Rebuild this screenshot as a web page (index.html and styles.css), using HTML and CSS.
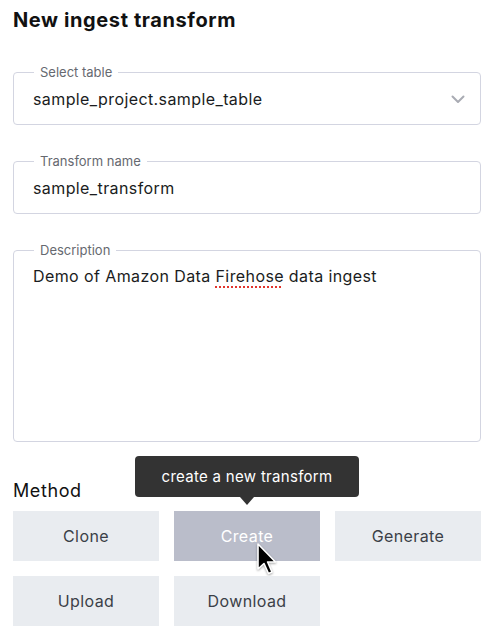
FILE: index.html
```html
<!DOCTYPE html>
<html>
<head>
<meta charset="utf-8">
<link rel="stylesheet" href="styles.css">
</head>
<body>
<div class="page">
  <h1 class="title">New ingest transform</h1>

  <fieldset class="field field-select">
    <legend class="legend">Select table</legend>
    <div class="value-row">
      <span class="value">sample_project.sample_table</span>
      <svg class="chevron" width="14" height="9" viewBox="0 0 14 9"><path d="M1.5 1.5 L7 7 L12.5 1.5" fill="none" stroke="#a9abb3" stroke-width="2" stroke-linecap="round" stroke-linejoin="round"/></svg>
    </div>
  </fieldset>

  <fieldset class="field field-name">
    <legend class="legend">Transform name</legend>
    <div class="value-row"><span class="value">sample_transform</span></div>
  </fieldset>

  <fieldset class="field field-desc">
    <legend class="legend">Description</legend>
    <div class="desc-text">Demo of Amazon Data <span class="misspelled">Firehose</span> data ingest</div>
  </fieldset>

  <div class="method-label">Method</div>
  <div class="methods">
    <div class="btn">Clone</div>
    <div class="btn btn-active">Create
      <div class="tooltip">create a new transform</div>
      <svg class="cursor" width="22" height="34" viewBox="0 0 22 34"><path d="M2 2 L2 27 L8 21.5 L12.5 31.5 L16 30 L11.6 20 L19.5 20 Z" fill="#000" stroke="#fff" stroke-width="1.6" stroke-linejoin="round"/></svg>
    </div>
    <div class="btn">Generate</div>
    <div class="btn">Upload</div>
    <div class="btn">Download</div>
  </div>
</div>
</body>
</html>
```

FILE: styles.css
```css
html, body {
  margin: 0;
  padding: 0;
  background: #fff;
}
body {
  font-family: Inter, "Noto Sans", "Liberation Sans", sans-serif;
  color: #1d1f24;
}
.page {
  padding: 8px 11px 0 13px;
}
.title {
  margin: 0;
  font-size: 20px;
  line-height: 24px;
  font-weight: 700;
  letter-spacing: 0.6px;
  color: #111;
}
.field {
  margin: 0;
  border: 1px solid #d3d5e1;
  border-radius: 4px;
  padding: 0 19px;
  min-width: 0;
}
.field-select {
  margin-top: 32px;
}
.field-name, .field-desc {
  margin-top: 28px;
}
.legend {
  font-size: 13px;
  line-height: 16px;
  color: #666970;
  padding: 0 6px;
  margin-left: 1px;
}
.value-row {
  display: flex;
  align-items: center;
  justify-content: space-between;
  padding: 9px 0 15px;
}
.value {
  font-size: 16px;
  line-height: 20px;
  letter-spacing: 0.4px;
  color: #1a1c21;
}
.chevron {
  margin-right: -4px;
}
.desc-text {
  font-size: 16px;
  line-height: 20px;
  letter-spacing: 0.4px;
  color: #1a1c21;
  padding-top: 8px;
  height: 175px;
}
.misspelled {
  text-decoration-line: underline;
  text-decoration-style: dotted;
  text-decoration-color: #e2342c;
  text-decoration-thickness: 2px;
  text-underline-offset: 4px;
}
.method-label {
  margin-top: 38px;
  font-size: 18px;
  line-height: 22px;
  letter-spacing: 0.6px;
  color: #111;
}
.methods {
  margin-top: 9px;
  display: grid;
  grid-template-columns: repeat(3, 146px);
  grid-auto-rows: 50px;
  gap: 15px;
}
.btn {
  position: relative;
  background: #e9ecf0;
  color: #3b3f47;
  font-size: 16px;
  letter-spacing: 0.4px;
  display: flex;
  align-items: center;
  justify-content: center;
}
.btn-active {
  background: #babdca;
  color: #fff;
}
.tooltip {
  position: absolute;
  left: 50%;
  bottom: calc(100% + 14px);
  transform: translateX(-50%);
  width: 224px;
  height: 41px;
  box-sizing: border-box;
  background: #333333;
  color: #fff;
  font-size: 15px;
  line-height: 41px;
  letter-spacing: 0.3px;
  text-align: center;
  border-radius: 4px;
}
.tooltip::after {
  content: "";
  position: absolute;
  left: 50%;
  top: 100%;
  margin-left: -7px;
  border-left: 7px solid transparent;
  border-right: 7px solid transparent;
  border-top: 8px solid #333333;
}
.cursor {
  position: absolute;
  left: 82px;
  top: 31px;
  filter: drop-shadow(0 1px 1px rgba(0,0,0,0.35));
}
```
